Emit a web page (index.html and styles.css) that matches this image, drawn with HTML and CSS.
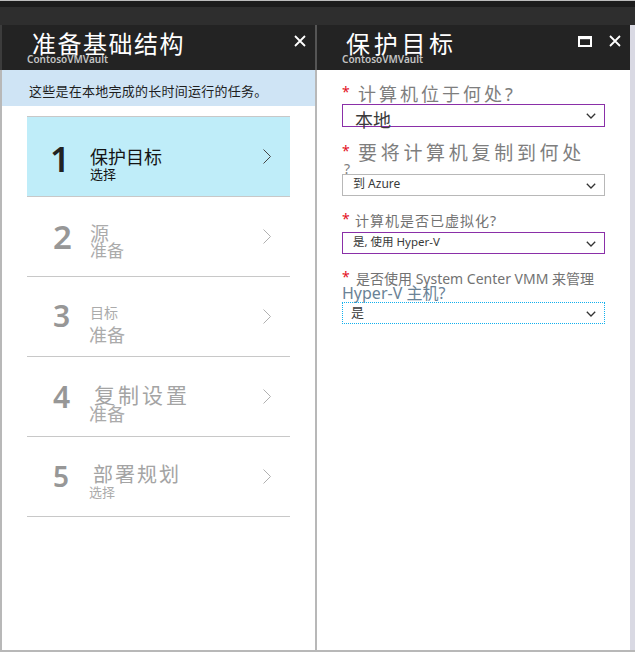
FILE: index.html
```html
<!DOCTYPE html>
<html lang="zh-CN">
<head>
<meta charset="utf-8">
<title>准备基础结构</title>
<link rel="stylesheet" href="styles.css">
</head>
<body>
<div class="frame">
  <div class="top-line"></div>
  <div class="top-dark"></div>
  <div class="top-band"></div>
  <div class="blades">
    <div class="edge-left"></div>

    <section class="blade">
      <header class="blade-header">
        <div class="titles">
          <h1 class="title">准备基础结构</h1>
          <div class="vault">ContosoVMVault</div>
        </div>
        <div class="header-icons">
          <svg class="icon-close" width="12" height="12" viewBox="0 0 12 12"><path d="M1 1L11 11M11 1L1 11" stroke="#fff" stroke-width="1.8" fill="none"/></svg>
        </div>
      </header>
      <div class="banner">这些是在本地完成的长时间运行的任务。</div>
      <ul class="steps">
        <li class="step step-active s1">
          <span class="num">1</span>
          <div class="step-text"><div class="step-title">保护目标</div><div class="step-sub">选择</div></div>
          <svg class="chev" width="8" height="15" viewBox="0 0 8 15"><polyline points="0.5,0.5 7.5,7.5 0.5,14.5" fill="none" stroke-width="1"/></svg>
        </li>
        <li class="step s2">
          <span class="num">2</span>
          <div class="step-text"><div class="step-title">源</div><div class="step-sub">准备</div></div>
          <svg class="chev" width="8" height="15" viewBox="0 0 8 15"><polyline points="0.5,0.5 7.5,7.5 0.5,14.5" fill="none" stroke-width="1"/></svg>
        </li>
        <li class="step s3">
          <span class="num">3</span>
          <div class="step-text"><div class="step-title">目标</div><div class="step-sub">准备</div></div>
          <svg class="chev" width="8" height="15" viewBox="0 0 8 15"><polyline points="0.5,0.5 7.5,7.5 0.5,14.5" fill="none" stroke-width="1"/></svg>
        </li>
        <li class="step s4">
          <span class="num">4</span>
          <div class="step-text"><div class="step-title">复制设置</div><div class="step-sub">准备</div></div>
          <svg class="chev" width="8" height="15" viewBox="0 0 8 15"><polyline points="0.5,0.5 7.5,7.5 0.5,14.5" fill="none" stroke-width="1"/></svg>
        </li>
        <li class="step s5">
          <span class="num">5</span>
          <div class="step-text"><div class="step-title">部署规划</div><div class="step-sub">选择</div></div>
          <svg class="chev" width="8" height="15" viewBox="0 0 8 15"><polyline points="0.5,0.5 7.5,7.5 0.5,14.5" fill="none" stroke-width="1"/></svg>
        </li>
      </ul>
    </section>

    <div class="divider"></div>

    <section class="blade">
      <header class="blade-header">
        <div class="titles">
          <h1 class="title title-right">保护目标</h1>
          <div class="vault">ContosoVMVault</div>
        </div>
        <div class="header-icons">
          <svg class="icon-max" width="14" height="11" viewBox="0 0 14 11"><rect x="1" y="1.5" width="12" height="8.5" fill="none" stroke="#fff" stroke-width="2"/><rect x="0" y="0" width="14" height="3.2" fill="#fff"/></svg>
          <svg class="icon-close" width="12" height="12" viewBox="0 0 12 12"><path d="M1 1L11 11M11 1L1 11" stroke="#fff" stroke-width="1.8" fill="none"/></svg>
        </div>
      </header>
      <form class="form">
        <div class="field f1">
          <div class="label"><span class="req">*</span><span class="label-text">计算机位于何处?</span></div>
          <div class="select sel-purple"><span class="sel-text">本地</span><svg class="sel-chev" width="10" height="6" viewBox="0 0 10 6"><polyline points="0.8,0.8 5,5 9.2,0.8" fill="none" stroke="#333" stroke-width="1.3"/></svg></div>
        </div>
        <div class="field f2">
          <div class="label"><span class="req">*</span><span class="label-text">要将计算机复制到何处</span></div>
          <div class="label-wrap">?</div>
          <div class="select"><span class="sel-text">到 Azure</span><svg class="sel-chev" width="10" height="6" viewBox="0 0 10 6"><polyline points="0.8,0.8 5,5 9.2,0.8" fill="none" stroke="#333" stroke-width="1.3"/></svg></div>
        </div>
        <div class="field f3">
          <div class="label"><span class="req">*</span><span class="label-text">计算机是否已虚拟化?</span></div>
          <div class="select sel-purple"><span class="sel-text">是, 使用 Hyper-V</span><svg class="sel-chev" width="10" height="6" viewBox="0 0 10 6"><polyline points="0.8,0.8 5,5 9.2,0.8" fill="none" stroke="#333" stroke-width="1.3"/></svg></div>
        </div>
        <div class="field f4">
          <div class="label"><span class="req">*</span><span class="label-text">是否使用 System Center VMM 来管理</span></div>
          <div class="label-wrap">Hyper-V 主机?</div>
          <div class="select sel-focus"><span class="sel-text">是</span><svg class="sel-chev" width="10" height="6" viewBox="0 0 10 6"><polyline points="0.8,0.8 5,5 9.2,0.8" fill="none" stroke="#333" stroke-width="1.3"/></svg></div>
        </div>
      </form>
    </section>

    <div class="edge-right"></div>
  </div>
  <div class="bottom-line"></div>
</div>
</body>
</html>
```

FILE: styles.css
```css
* { box-sizing: border-box; }

html, body {
  margin: 0;
  padding: 0;
  background: #ffffff;
}

body {
  font-family: "Noto Sans", "Noto Sans CJK SC", sans-serif;
  width: 635px;
  height: 652px;
  overflow: hidden;
}

.frame {
  width: 635px;
  height: 652px;
  display: flex;
  flex-direction: column;
}

.top-line { height: 1px; background: #bdbdbd; }
.top-dark { height: 6px; background: #1c1c1c; }
.top-band { height: 18px; background: #2e2e2e; }

.blades {
  height: 625px;
  display: flex;
}

.edge-left {
  width: 2px;
  background: linear-gradient(#3c3c3c 0, #3c3c3c 45px, #b8b8b8 45px);
}

.divider {
  width: 2px;
  background: linear-gradient(#555555 0, #555555 45px, #b8b8b8 45px);
}

.edge-right {
  width: 5px;
  background: #d9d9e3;
}

.bottom-line { height: 2px; background: #b8b8b8; }

.blade {
  width: 313px;
  background: #ffffff;
  display: flex;
  flex-direction: column;
}

/* header */
.blade-header {
  height: 45px;
  flex-shrink: 0;
  background: #232323;
  display: flex;
  justify-content: space-between;
  align-items: flex-start;
}

.titles {
  padding: 5px 0 0 25px;
}

.title {
  margin: 0 0 0 5px;
  font-size: 24px;
  line-height: 28px;
  font-weight: 400;
  color: #ffffff;
  letter-spacing: 1.5px;
  white-space: nowrap;
}

.title-right {
  margin-left: 4px;
  letter-spacing: 3.7px;
}

.vault {
  font-size: 10px;
  line-height: 12px;
  margin-top: -5px;
  color: #c4c4c4;
  font-weight: 600;
  white-space: nowrap;
}

.header-icons {
  display: flex;
  align-items: flex-start;
  gap: 17px;
  margin: 10px 9px 0 0;
}

.icon-max { margin-top: 1px; }

/* banner */
.banner {
  height: 36px;
  flex-shrink: 0;
  padding: 11px 0 0 27px;
  background: #cfe4f5;
  color: #1e1e1e;
  font-size: 13px;
  line-height: 20px;
  letter-spacing: 0.25px;
  white-space: nowrap;
}

/* steps */
.steps {
  list-style: none;
  margin: 10px 25px 0;
  padding: 0;
  border-top: 1px solid #c8c8c8;
}

.step {
  height: 80px;
  border-bottom: 1px solid #c8c8c8;
  display: flex;
  align-items: flex-start;
  color: #ababab;
}

.step-active {
  background: #bfedf9;
  color: #141414;
}

.num {
  width: 63px;
  flex-shrink: 0;
  padding-left: 26px;
  font-weight: 600;
  color: #979797;
}

.step-active .num { color: #222222; }

.step-text { white-space: nowrap; }

.chev {
  margin-left: auto;
  margin-right: 19px;
  align-self: center;
  stroke: #b0b0b0;
}

.step-active .chev { stroke: #444444; }

/* step 1 */
.s1 .num { font-size: 35px; line-height: 35px; margin-top: 24px; padding-left: 23px; }
.s1 .step-text { padding-top: 30px; }
.s1 .step-title { font-size: 18px; line-height: 20px; }
.s1 .step-sub { font-size: 13px; line-height: 15px; }

/* step 2 */
.s2 .num { font-size: 33px; line-height: 33px; margin-top: 23px; }
.s2 .step-text { padding-top: 27px; }
.s2 .step-title { font-size: 19px; line-height: 21px; }
.s2 .step-sub { font-size: 17px; line-height: 19px; margin-top: -4px; }

/* step 3 */
.s3 .num { font-size: 30px; line-height: 30px; margin-top: 24px; }
.s3 .step-text { padding-top: 28px; }
.s3 .step-title { font-size: 14px; line-height: 16px; }
.s3 .step-sub { font-size: 18px; line-height: 20px; margin-top: 4px; margin-left: -1px; }

/* step 4 */
.s4 .num { font-size: 30px; line-height: 30px; margin-top: 25px; }
.s4 .step-text { padding-top: 26px; }
.s4 .step-title { font-size: 21px; line-height: 24px; letter-spacing: 3px; padding-left: 4px; color: #a4a4a4; }
.s4 .step-sub { font-size: 18px; line-height: 20px; margin-top: -3px; margin-left: -1px; }

/* step 5 */
.s5 .num { font-size: 28px; line-height: 28px; margin-top: 25px; }
.s5 .step-text { padding-top: 27px; }
.s5 .step-title { font-size: 20px; line-height: 22px; letter-spacing: 2px; padding-left: 3px; color: #a4a4a4; }
.s5 .step-sub { font-size: 13px; line-height: 15px; margin-top: -1px; margin-left: -1px; }

/* form */
.form {
  padding: 15px 25px 0;
  margin: 0;
}

.label {
  display: flex;
  align-items: flex-start;
  white-space: nowrap;
}

.req {
  width: 16px;
  flex-shrink: 0;
  font-size: 14px;
  line-height: 14px;
  color: #e3101e;
}

.label-text { color: #7e7e7e; }

.f1 .label-text { font-size: 18px; line-height: 19px; letter-spacing: 3px; }

.f2 { margin-top: 17px; }
.f2 .label-text { font-size: 19px; line-height: 19px; letter-spacing: 3.7px; }
.f2 .label-wrap {
  font-size: 14px;
  line-height: 11px;
  padding-left: 2px;
  color: #7e7e7e;
}

.f3 { margin-top: 16px; }
.f3 .req { width: 13px; }
.f3 .label-text { font-size: 14px; line-height: 18px; letter-spacing: 1px; color: #727272; }
.f3 .select { margin-top: 2px; }

.f4 { margin-top: 16px; }
.f4 .req { width: 14px; }
.f4 .label-text { font-size: 14px; line-height: 18px; letter-spacing: 0; color: #727272; }
.f4 .label-wrap {
  font-size: 16px;
  line-height: 10px;
  color: #6a8296;
  white-space: nowrap;
}
.f4 .select { margin-top: 4px; }

.select {
  height: 22px;
  border: 1px solid #b8b8b8;
  display: flex;
  align-items: flex-start;
  padding: 2px 0 0 10px;
  color: #3a3a3a;
  font-size: 12px;
  line-height: 14px;
  white-space: nowrap;
}

.sel-purple { border-color: #8a2fa8; }

.f1 .select {
  height: 23px;
  padding: 5px 0 0 12px;
  font-size: 18px;
  line-height: 20px;
}

.f3 .select { font-size: 11.5px; }

.sel-focus {
  border: 1px dotted #a24ac0;
  outline: 1px dotted #12b0ee;
  outline-offset: -1px;
  padding-left: 8px;
  font-size: 13px;
  line-height: 15px;
}

.sel-chev {
  margin-left: auto;
  margin-right: 8px;
  align-self: center;
  flex-shrink: 0;
}

.f1 .sel-chev { margin-top: -4px; }
```
